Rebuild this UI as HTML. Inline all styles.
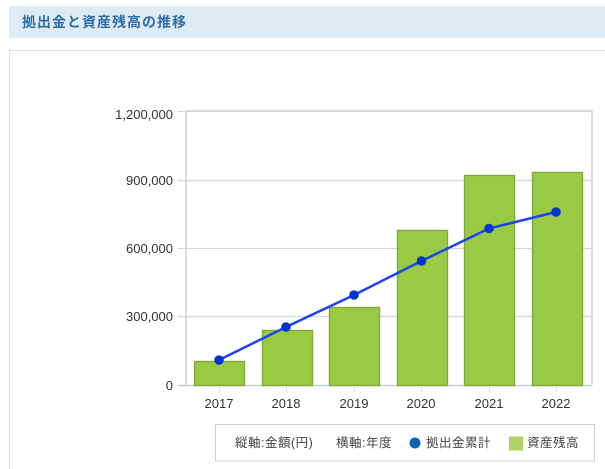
<!DOCTYPE html>
<html lang="ja">
<head>
<meta charset="utf-8">
<style>
html,body{margin:0;padding:0;background:#fff;width:605px;height:469px;overflow:hidden}
body{position:relative;font-family:"Liberation Sans","Noto Sans CJK JP",sans-serif}
.band{position:absolute;left:9px;top:6px;width:596px;height:32px;background:#dfeaf2}
.band span{position:absolute;left:13px;top:7px;font-size:14px;line-height:18px;font-weight:bold;color:#2a6ea8;letter-spacing:1px;white-space:nowrap}
.panel{position:absolute;left:9px;top:50px;width:600px;height:430px;border:1px solid #dedede;box-sizing:border-box}
svg{position:absolute;left:0;top:0}
</style>
</head>
<body>
<div class="band"><span>拠出金と資産残高の推移</span></div>
<div class="panel"></div>
<svg width="605" height="469" viewBox="0 0 605 469">
  <g fill="none" stroke="#d4d6d9" stroke-width="1.200">
    <path d="M178 180.5H592M178 248.5H592M178 316.5H592"/>
    <path d="M178 111.5H592" />
  </g>
  <path d="M186 111V385M592 111V385" stroke="#d8d9db" stroke-width="1.800" fill="none"/>
  <path d="M186 110.7H592.500" stroke="#d8d9db" stroke-width="1.800" fill="none"/>
  <path d="M178 385.5H592" stroke="#c8cacc" stroke-width="1.600" fill="none"/>
  <g stroke="#ccc" stroke-dasharray="1 1" fill="none">
    <path d="M219.500 387V393M286.500 387V393M354.500 387V393M421.500 387V393M489.500 387V393M556.500 387V393"/>
  </g>
  <g fill="#9aca43" stroke="#84a83c" stroke-width="1.400">
    <rect x="194.500" y="361.500" width="50" height="24"/>
    <rect x="262.500" y="330.500" width="50" height="55"/>
    <rect x="329.500" y="307.500" width="50" height="78"/>
    <rect x="397.500" y="230.500" width="50" height="155"/>
    <rect x="464.500" y="175.500" width="50" height="210"/>
    <rect x="532.500" y="172.500" width="50" height="213"/>
  </g>
  <polyline points="219,360 286,327 354,295 421.500,261 489,228.500 556,212" fill="none" stroke="#1a45f0" stroke-width="2.500"/>
  <g fill="#0536cc">
    <circle cx="219" cy="360" r="4.800"/>
    <circle cx="286" cy="327" r="4.800"/>
    <circle cx="354" cy="295" r="4.800"/>
    <circle cx="421.500" cy="261" r="4.800"/>
    <circle cx="489" cy="228.500" r="4.800"/>
    <circle cx="556" cy="212" r="4.800"/>
  </g>
  <g font-family="'Liberation Sans','Noto Sans CJK JP',sans-serif" font-size="13" fill="#333" text-anchor="end">
    <text x="173" y="119">1,200,000</text>
    <text x="173" y="185">900,000</text>
    <text x="173" y="253">600,000</text>
    <text x="173" y="321">300,000</text>
    <text x="173" y="390">0</text>
  </g>
  <g font-family="'Liberation Sans','Noto Sans CJK JP',sans-serif" font-size="13" fill="#333" text-anchor="middle">
    <text x="219" y="408">2017</text>
    <text x="286" y="408">2018</text>
    <text x="354" y="408">2019</text>
    <text x="421" y="408">2020</text>
    <text x="489" y="408">2021</text>
    <text x="556" y="408">2022</text>
  </g>
  <rect x="215.500" y="424.500" width="379" height="36.500" fill="#fff" stroke="#d0d0d0"/>
  <g font-family="'Liberation Sans','Noto Sans CJK JP',sans-serif" font-size="12.500" fill="#444" letter-spacing=".5">
    <text x="235" y="447">縦軸:金額(円)</text>
    <text x="336" y="447">横軸:年度</text>
    <text x="426" y="447">拠出金累計</text>
    <text x="527" y="447">資産残高</text>
  </g>
  <circle cx="415" cy="443" r="5.500" fill="#0f63b5"/>
  <rect x="509" y="436.500" width="14" height="14" fill="#b2d266"/>
</svg>
</body>
</html>
